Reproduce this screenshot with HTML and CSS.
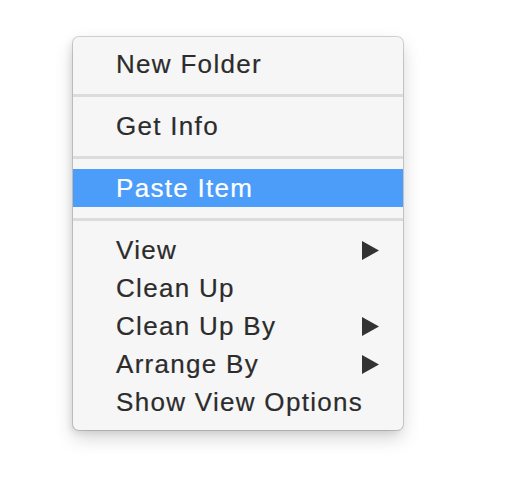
FILE: index.html
```html
<!DOCTYPE html>
<html>
<head>
<meta charset="utf-8">
<link rel="stylesheet" href="styles.css">
</head>
<body>
<div class="stage">
  <div class="menu">
    <div class="item">New Folder</div>
    <div class="sep"></div>
    <div class="item">Get Info</div>
    <div class="sep"></div>
    <div class="item active">Paste Item</div>
    <div class="sep"></div>
    <div class="item sub"><span>View</span><svg class="arrow" viewBox="0 0 17 19"><polygon points="0,0 17,9.5 0,19"/></svg></div>
    <div class="item">Clean Up</div>
    <div class="item sub"><span>Clean Up By</span><svg class="arrow" viewBox="0 0 17 19"><polygon points="0,0 17,9.5 0,19"/></svg></div>
    <div class="item sub"><span>Arrange By</span><svg class="arrow" viewBox="0 0 17 19"><polygon points="0,0 17,9.5 0,19"/></svg></div>
    <div class="item">Show View Options</div>
  </div>
</div>
</body>
</html>
```
FILE: styles.css
```css
html, body {
  margin: 0;
  padding: 0;
  height: 100%;
  background: #ffffff;
}
.stage {
  box-sizing: border-box;
  min-height: 100%;
  padding: 37px 0 0 73px;
  display: flex;
  align-items: flex-start;
}
.menu {
  box-sizing: border-box;
  width: 330px;
  height: 393px;
  padding: 8px 0 9px 0;
  background: #f6f6f6;
  border-radius: 6px;
  box-shadow: 0 0 0 1px rgba(0,0,0,0.16), 0 8px 18px rgba(0,0,0,0.17), -3px 3px 6px rgba(0,0,0,0.07);
  font-family: "Liberation Sans", Arial, sans-serif;
  font-size: 26px;
  letter-spacing: 1.3px;
  color: #2c2c2c;
  -webkit-text-stroke: 0.2px #2c2c2c;
}
.item {
  height: 38px;
  line-height: 38px;
  padding: 0 24px 0 43px;
  display: flex;
  align-items: center;
  justify-content: space-between;
  white-space: nowrap;
}
.item.active {
  background: #4c9cf9;
  color: #ffffff;
  -webkit-text-stroke: 0.2px #ffffff;
}
.sep {
  height: 3px;
  margin: 11px 0 10px 0;
  background: #dcdcdc;
}
.arrow {
  width: 17px;
  height: 19px;
  fill: #333333;
  flex: none;
}
```
